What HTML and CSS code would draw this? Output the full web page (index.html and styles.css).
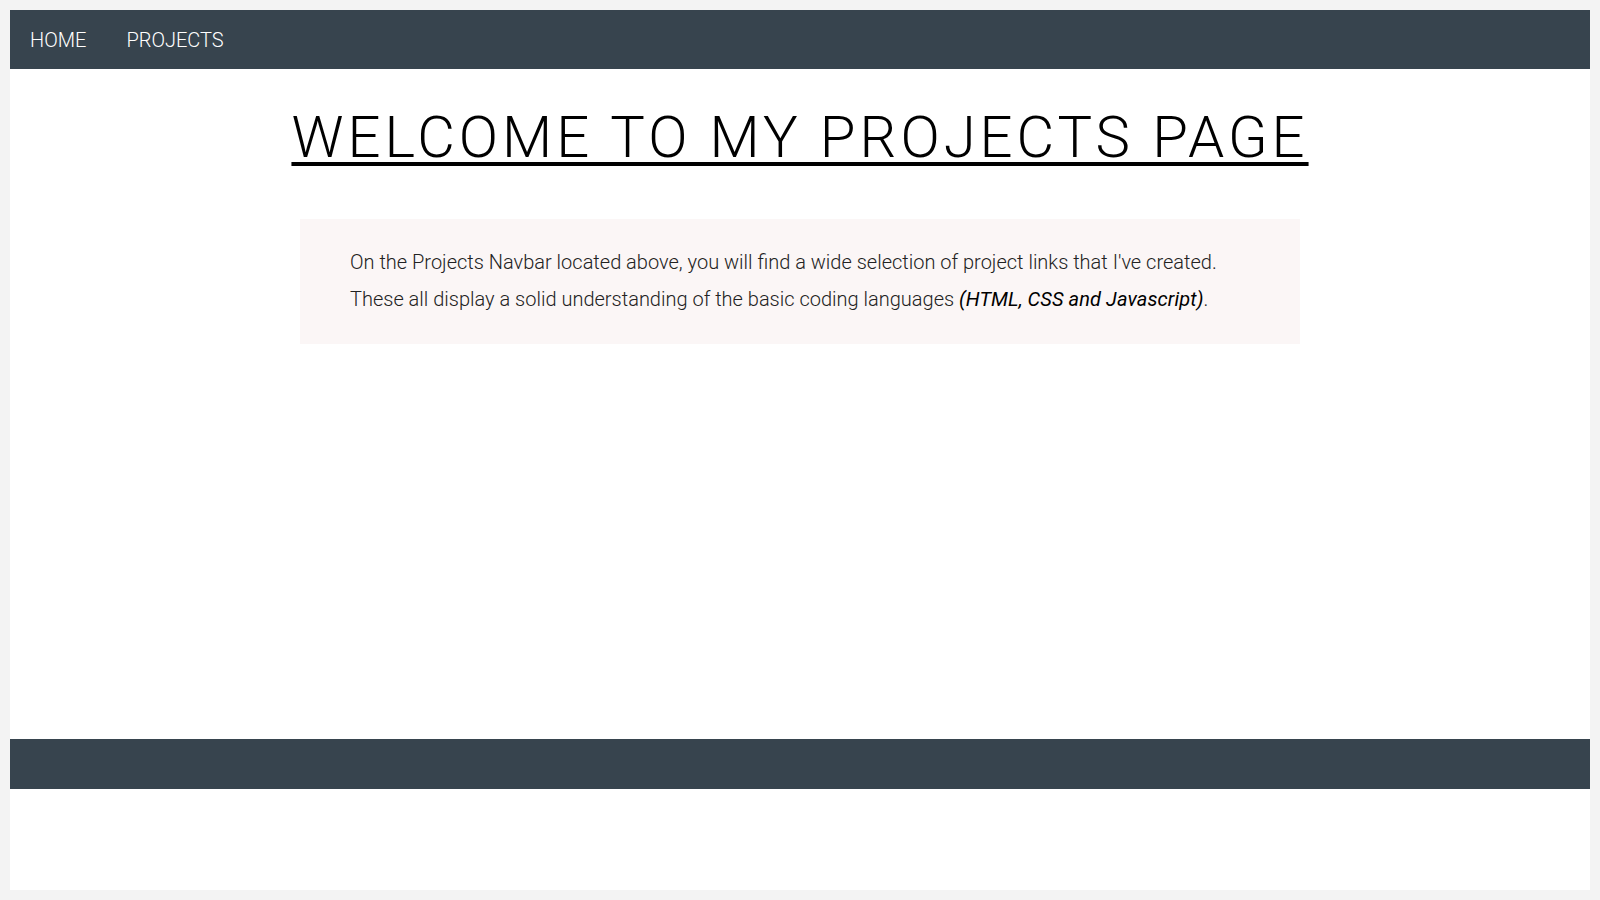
FILE: index.html
```html
<!DOCTYPE html>
<html lang="en">
<head>
<meta charset="utf-8">
<title>Projects</title>
<link rel="stylesheet" href="styles.css">
</head>
<body>
<div class="page">
  <nav class="navbar">
    <a class="nav-link" href="#">HOME</a>
    <a class="nav-link" href="#">PROJECTS</a>
  </nav>
  <main class="main">
    <h1 class="title">WELCOME TO MY PROJECTS PAGE</h1>
    <section class="intro">
      <p>On the Projects Navbar located above, you will find a wide selection of project links that I've created.</p>
      <p>These all display a solid understanding of the basic coding languages <em>(HTML, CSS and Javascript)</em>.</p>
    </section>
  </main>
  <footer class="footer"></footer>
  <div class="below"></div>
</div>
</body>
</html>
```
FILE: styles.css
```css
html, body {
  margin: 0;
  padding: 0;
}
body {
  background: #f3f3f3;
  padding: 10px;
  font-family: Roboto, "Liberation Sans", sans-serif;
}
.page {
  background: #ffffff;
  height: 880px;
  display: flex;
  flex-direction: column;
}
.navbar {
  height: 59px;
  background: #37444e;
  display: flex;
  align-items: center;
}
.nav-link {
  color: #ffffff;
  text-decoration: none;
  font-size: 20px;
  font-weight: 300;
  padding: 0 20px;
}
.main {
  flex: 1;
  display: flex;
  flex-direction: column;
  align-items: center;
}
.title {
  margin: 34px 0 48px 0;
  font-size: 58px;
  font-weight: 300;
  letter-spacing: 4px;
  color: #000;
  text-decoration: underline;
  text-decoration-thickness: 4px;
  text-underline-offset: 5px;
  line-height: 68px;
}
.intro {
  width: 1000px;
  box-sizing: border-box;
  background: #fbf6f6;
  padding: 25px 50px 26px 50px;
}
.intro p {
  margin: 0;
  font-size: 20px;
  font-weight: 300;
  line-height: 37px;
  color: #222;
}
.intro em {
  font-style: italic;
  font-weight: 400;
  letter-spacing: 0.1px;
  color: #000;
}
.footer {
  height: 50px;
  background: #37444e;
}
.below {
  height: 101px;
}
```
